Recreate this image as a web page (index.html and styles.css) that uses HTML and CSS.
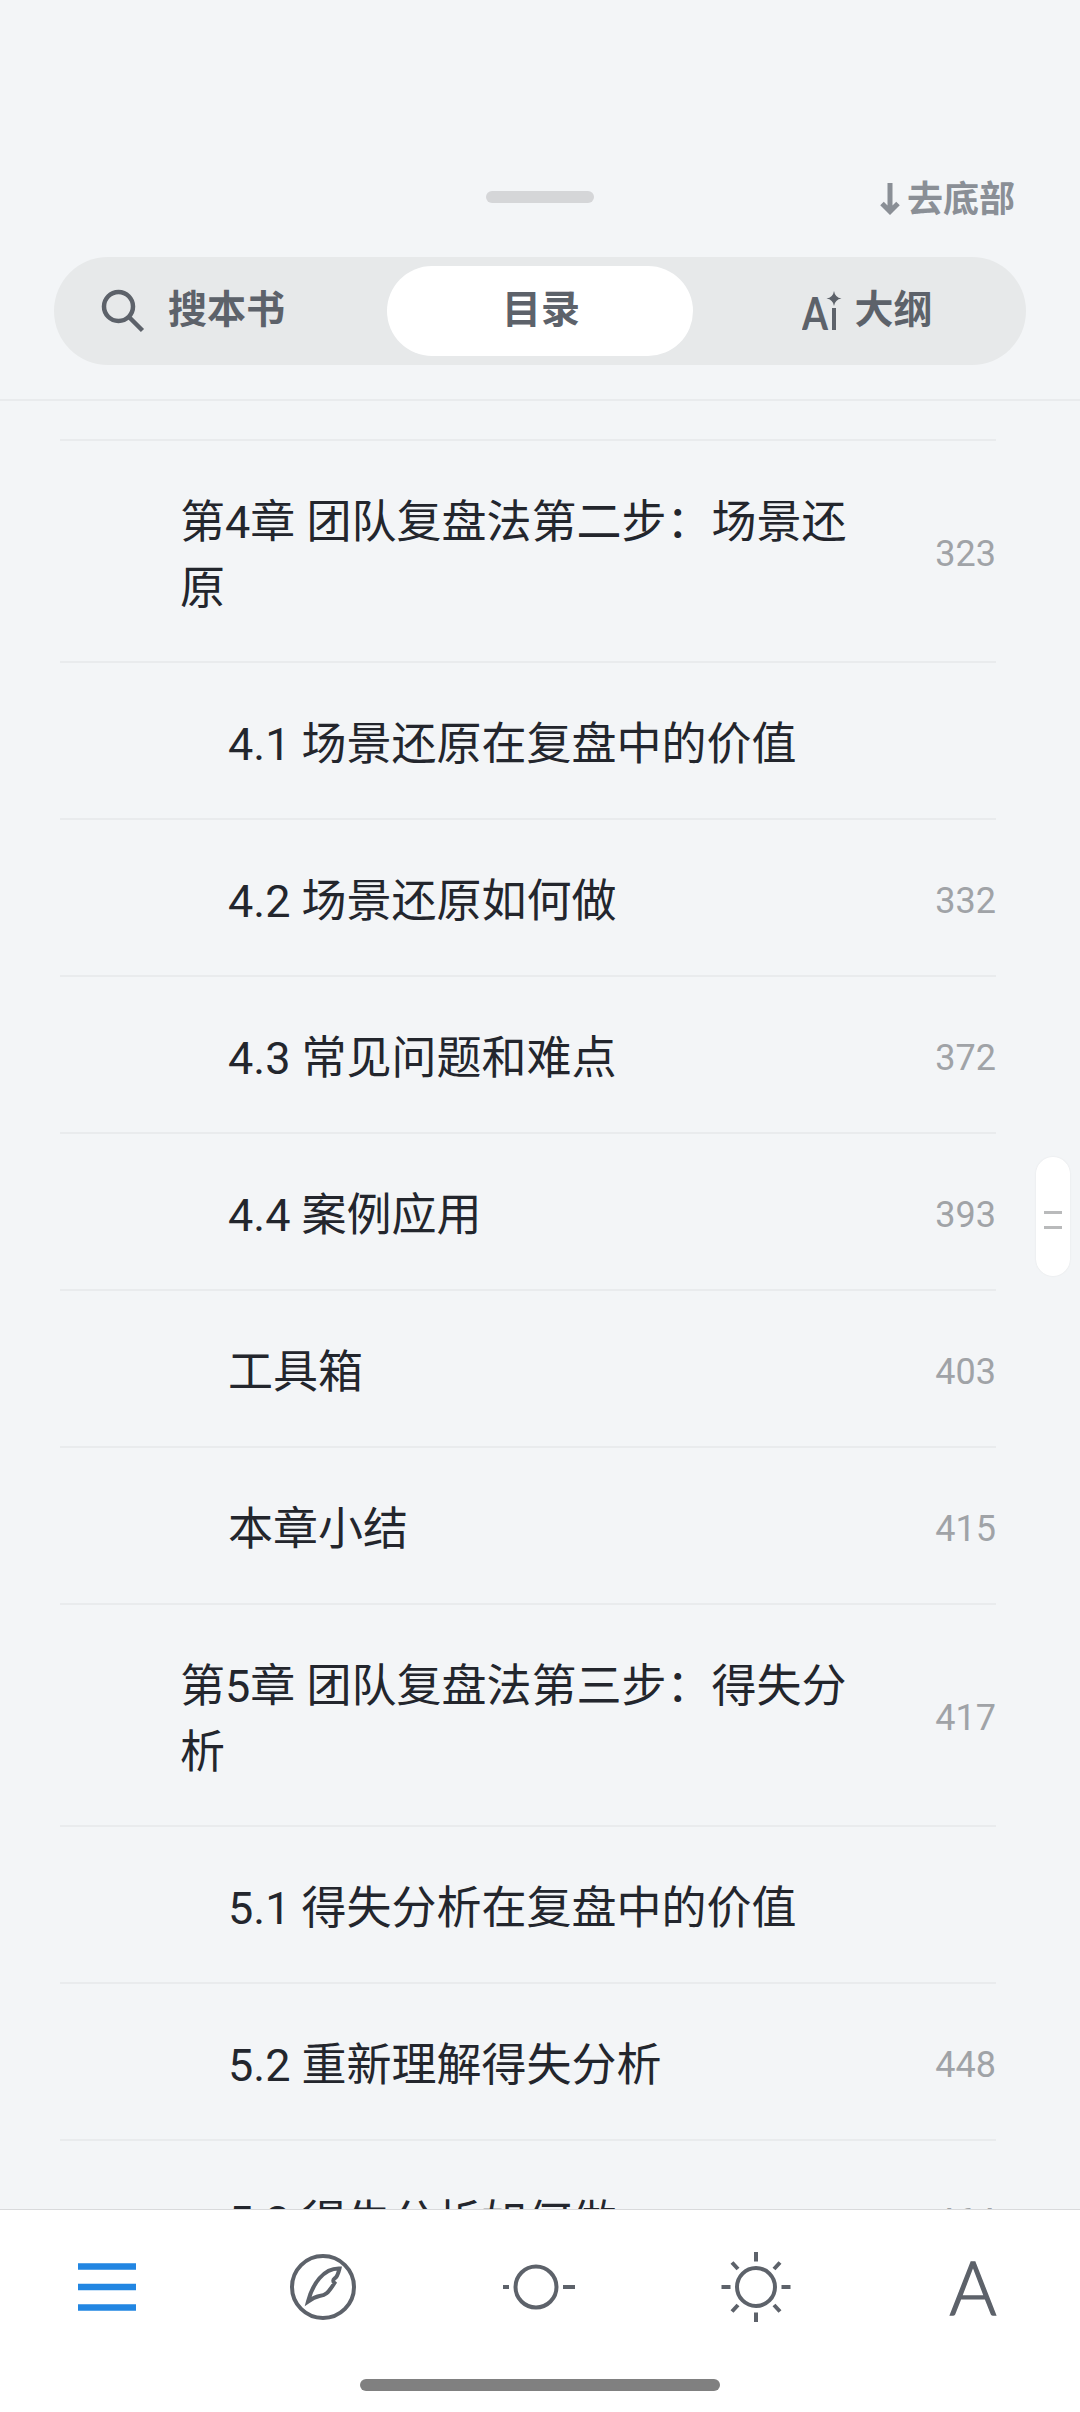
FILE: index.html
```html
<!DOCTYPE html>
<html lang="zh-CN">
<head>
  <meta charset="UTF-8" />
  <meta name="viewport" content="width=device-width, initial-scale=1.0" />
  <title>目录</title>
  <link rel="stylesheet" href="styles.css">
</head>
<body>
  <header class="header">
    <div class="header-top">
      <span class="grabber"></span>
      <button class="to-bottom">
        <svg width="20" height="36" viewBox="0 0 20 36"><path d="M10 1v28M2 21.500l8 8 8-8" /></svg>
        <span>去底部</span>
      </button>
    </div>
    <div class="tabs">
      <button class="tab tab-search">
        <svg class="search-icon" width="44" height="44" viewBox="0 0 44 44"><circle cx="17.500" cy="17.500" r="14.500" /><path d="M28 28l13.500 13.500" /></svg>
        <span>搜本书</span>
      </button>
      <button class="tab active"><span>目录</span></button>
      <button class="tab tab-ai">
        <svg class="ai-icon" width="40" height="40" viewBox="0 0 40 40">
          <text x="0" y="38.500" textLength="26" lengthAdjust="spacingAndGlyphs">A</text>
          <path d="M32 17v22" />
          <path class="star" d="M32 0q1 6.500 7.500 7.500q-6.500 1-7.500 7.500q-1-6.500-7.500-7.500q6.500-1 7.500-7.500z" />
        </svg>
        <span>大纲</span>
      </button>
    </div>
  </header>

  <main class="toc">
    <ul class="toc-list">
      <li class="toc-item chapter"><span class="title">第4章 团队复盘法第二步：场景还原</span><span class="page">323</span></li>
      <li class="toc-item"><span class="title">4.1 场景还原在复盘中的价值</span></li>
      <li class="toc-item"><span class="title">4.2 场景还原如何做</span><span class="page">332</span></li>
      <li class="toc-item"><span class="title">4.3 常见问题和难点</span><span class="page">372</span></li>
      <li class="toc-item"><span class="title">4.4 案例应用</span><span class="page">393</span></li>
      <li class="toc-item"><span class="title">工具箱</span><span class="page">403</span></li>
      <li class="toc-item"><span class="title">本章小结</span><span class="page">415</span></li>
      <li class="toc-item chapter"><span class="title">第5章 团队复盘法第三步：得失分析</span><span class="page">417</span></li>
      <li class="toc-item"><span class="title">5.1 得失分析在复盘中的价值</span></li>
      <li class="toc-item"><span class="title">5.2 重新理解得失分析</span><span class="page">448</span></li>
      <li class="toc-item"><span class="title">5.3 得失分析如何做</span><span class="page">464</span></li>
    </ul>
  </main>

  <div class="scroll-thumb"><i></i><i></i></div>

  <nav class="nav">
    <div class="nav-icons">
      <svg class="nav-icon menu" viewBox="0 0 80 80"><path d="M11 19.500h58M11 40h58M11 60.500h58" /></svg>
      <svg class="nav-icon" viewBox="0 0 80 80"><circle cx="39" cy="40" r="31" /><path d="M24 54.500C28.500 37 39.500 21 55.500 21.500C54 28 52.500 30.500 50.500 31.500Q48 33.500 50.500 36C43.500 47 41.500 48 35.500 49C30.500 50 27.500 52 24 54.500z" /></svg>
      <svg class="nav-icon" viewBox="0 0 80 80"><circle cx="36" cy="40" r="20.500" /><path d="M3 40h6M63 40h12" /></svg>
      <svg class="nav-icon" viewBox="0 0 80 80"><circle cx="39" cy="40" r="19" /><path d="M39 5v9.500M39 65.500v9.500M4.500 40h9M64.500 40h9M15 15.500l6 6.500M63 15.500l-6 6.500M15 64.500l6-6.500M63 64.500l-6-6.500" /></svg>
      <svg class="nav-icon font" viewBox="0 0 80 80"><text x="16.500" y="67.500" textLength="47" lengthAdjust="spacingAndGlyphs">A</text></svg>
    </div>
    <span class="home-bar"></span>
  </nav>
</body>
</html>
```
FILE: styles.css
```css
* { box-sizing: border-box; }
body { margin: 0; height: 2412px; display: flex; flex-direction: column; overflow: hidden; background: #f3f5f7; color: #23262d; font-family: Roboto, "Noto Sans CJK SC", sans-serif; }
svg { display: block; flex: none; fill: none; stroke: currentColor; stroke-width: 4; }
svg text { fill: currentColor; stroke: none; font-family: Lato, sans-serif; }
button { border: none; background: none; padding: 0; font: inherit; color: inherit; }

.header { flex: none; height: 401px; padding: 170px 54px 0; border-bottom: 2px solid #e9ebed; }
.header-top { display: grid; grid-template-columns: 1fr 108px 1fr; grid-template-rows: 54px; align-items: center; margin-bottom: 33px; }
.grabber { grid-column: 2; width: 108px; height: 12px; border-radius: 6px; background: #d5d6d8; }
.to-bottom { justify-self: end; display: flex; align-items: center; gap: 7px; margin-right: 11px; padding-top: 6px; font-size: 36px; font-weight: 700; line-height: 54px; color: #8a8f96; }
.to-bottom svg { stroke-width: 5; }
.tabs { display: grid; grid-template-columns: repeat(3, 306px); gap: 12px; height: 108px; padding: 9px 15px; border-radius: 54px; background: #e7e9ea; }
.tab { display: flex; align-items: center; justify-content: center; border-radius: 45px; font-size: 39px; font-weight: 700; line-height: 58px; color: #5d626a; }
.tab span { padding-bottom: 3px; }
.tab.active { background: #fff; padding-left: 2px; }
.tab-search { justify-content: flex-start; padding-left: 32px; gap: 23px; }
.tab-ai { gap: 12px; padding-left: 19px; }
.search-icon { stroke-width: 4.5; }
.ai-icon text { font-size: 46px; }
.ai-icon .star { fill: currentColor; stroke: none; }

.toc { flex: 1; min-height: 0; overflow: hidden; padding: 38px 84px 0 60px; }
.toc-list { margin: 0; padding: 0; list-style: none; border-top: 2px solid #e9ebed; }
.toc-item { display: flex; align-items: center; justify-content: space-between; height: 157px; padding-top: 6px; padding-left: 168px; border-bottom: 2px solid #e9ebed; }
.toc-item.chapter { height: 222px; padding-left: 120px; }
.title { max-width: 672px; padding-top: 3px; font-size: 45px; line-height: 66px; }
.page { font-size: 36px; color: #a0a3a7; }

.scroll-thumb { position: fixed; top: 1157px; right: 10px; width: 34px; height: 119px; display: flex; flex-direction: column; align-items: center; justify-content: center; gap: 12px; padding-top: 7px; border-radius: 17px; background: #fff; box-shadow: 0 0 2px rgba(0,0,0,0.08); }
.scroll-thumb i { width: 18px; height: 3px; background: #b9babb; }

.nav { flex: none; height: 203px; border-top: 1px solid #d9dadc; background: #fff; color: #5d626a; }
.nav-icons { display: flex; justify-content: space-between; padding: 37px 67px 0; height: 169px; }
.nav-icon { width: 80px; height: 80px; }
.nav-icon.menu { color: #2286e2; stroke-width: 6.500; }
.nav-icon.font text { font-size: 74px; font-weight: 300; stroke: currentColor; stroke-width: 1.5; }
.home-bar { display: block; width: 360px; height: 12px; margin: 0 auto; border-radius: 6px; background: #808080; }
```
